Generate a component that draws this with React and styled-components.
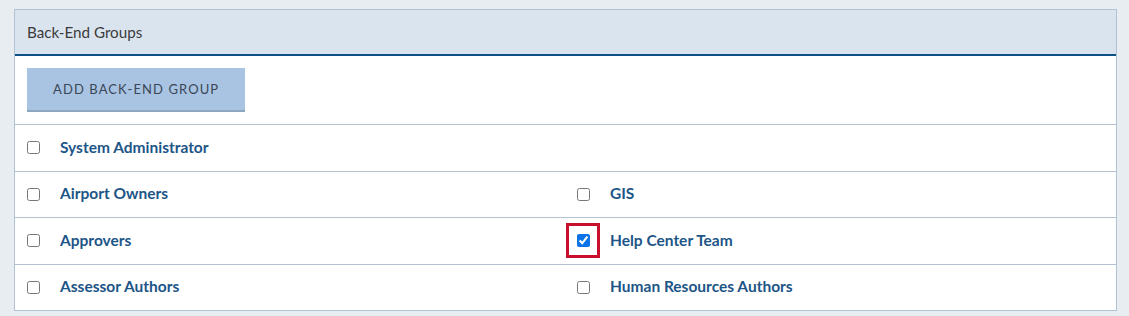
import React, { useState } from 'react';
import styled, { createGlobalStyle } from 'styled-components';

const GlobalStyle = createGlobalStyle`
    html, body {
        margin: 0;
        padding: 0;
        background-color: #e8edf1;
    }
    body {
        font-family: 'Lato', 'Liberation Sans', sans-serif;
    }
`;

const Page = styled.div`
    padding: 9px 12px 0 14px;
`;

const Panel = styled.section`
    background-color: #fff;
    border: 1px solid #b3c2d2;
    border-bottom: none;
`;

const PanelHeader = styled.div`
    background-color: #dae4ef;
    border-bottom: 2px solid #0b5185;
    height: 44px;
    display: flex;
    align-items: center;
    padding: 0 12px;
    font-size: 15.2px;
    color: #3a3a3a;
`;

const Toolbar = styled.div`
    padding: 12px;
    border-bottom: 1px solid #b3c2d2;
`;

const AddButton = styled.button`
    height: 44px;
    padding: 0 26px;
    background-color: #a8c4e2;
    border: none;
    border-bottom: 2px solid #8ea6c0;
    font-family: inherit;
    font-size: 13px;
    letter-spacing: 1.1px;
    color: #3b4656;
    cursor: pointer;
`;

const Row = styled.div`
    display: grid;
    grid-template-columns: 550px 1fr;
    height: 45.5px;
    border-bottom: 1px solid #b3c2d2;
`;

const Cell = styled.label`
    display: flex;
    align-items: center;
    padding-left: 12px;
    cursor: pointer;
`;

const Mark = styled.span`
    display: flex;
    align-items: center;
    justify-content: center;
    width: 34px;
    height: 35px;
    margin-left: -11px;
    margin-right: 10px;
    box-sizing: border-box;
    border: 3px solid ${(p) => (p.$highlight ? '#c8102e' : 'transparent')};
`;

const Box = styled.input`
    width: 13px;
    height: 13px;
    margin: 0;
    accent-color: #0b73e8;
`;

const Name = styled.span`
    font-size: 15.5px;
    font-weight: 700;
    color: #1d5587;
    margin-top: -2px;
`;

const rows = [
    ['System Administrator', null],
    ['Airport Owners', 'GIS'],
    ['Approvers', 'Help Center Team'],
    ['Assessor Authors', 'Human Resources Authors'],
];

const Group = ({ name, checked, highlight, onToggle }) => (
    <Cell>
        <Mark $highlight={highlight}>
            <Box type="checkbox" checked={checked} onChange={onToggle} />
        </Mark>
        <Name>{name}</Name>
    </Cell>
);

const App = () => {
    const [selected, setSelected] = useState({ 'Help Center Team': true });

    const toggle = (name) => setSelected((s) => ({ ...s, [name]: !s[name] }));

    return (
        <>
            <GlobalStyle />
            <Page>
                <Panel>
                    <PanelHeader>Back-End Groups</PanelHeader>
                    <Toolbar>
                        <AddButton>ADD BACK-END GROUP</AddButton>
                    </Toolbar>
                    {rows.map(([left, right]) => (
                        <Row key={left}>
                            <Group name={left} checked={!!selected[left]} onToggle={() => toggle(left)} />
                            {right && (
                                <Group
                                    name={right}
                                    checked={!!selected[right]}
                                    highlight={right === 'Help Center Team'}
                                    onToggle={() => toggle(right)}
                                />
                            )}
                        </Row>
                    ))}
                </Panel>
            </Page>
        </>
    );
};

export default App;
